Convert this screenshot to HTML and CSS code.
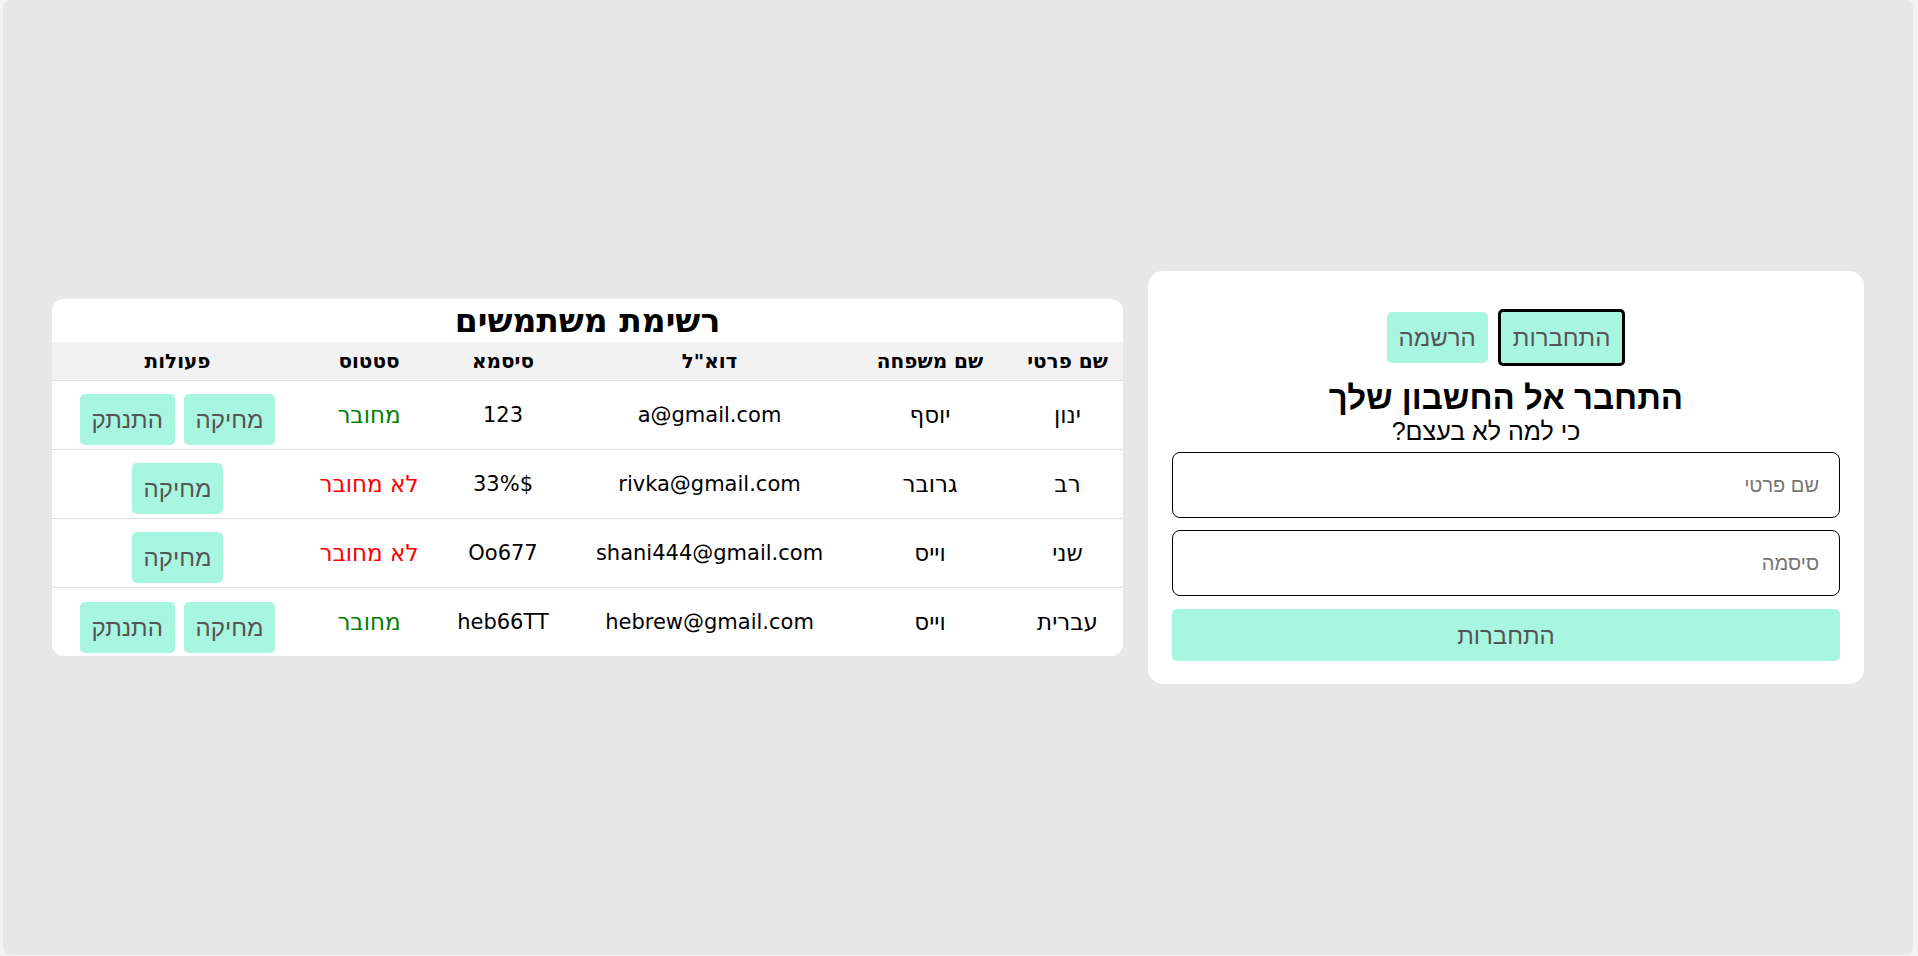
FILE: index.html
```html
<!DOCTYPE html>
<html lang="he" dir="rtl">
<head>
<meta charset="utf-8">
<title>משתמשים</title>
<link rel="stylesheet" href="styles.css">
</head>
<body>
<div class="page">
  <section class="login-card">
    <div class="tabs">
      <button class="tab tab-active">התחברות</button>
      <button class="tab">הרשמה</button>
    </div>
    <h1 class="login-title">התחבר אל החשבון שלך</h1>
    <p class="login-sub">כי למה לא בעצם?</p>
    <input class="field field-first" type="text" placeholder="שם פרטי">
    <input class="field field-second" type="password" placeholder="סיסמה">
    <button class="submit">התחברות</button>
  </section>

  <section class="users-card">
    <h2 class="users-title">רשימת משתמשים</h2>
    <table class="users">
      <colgroup>
        <col class="c-first">
        <col class="c-last">
        <col class="c-email">
        <col class="c-pass">
        <col class="c-status">
        <col class="c-actions">
      </colgroup>
      <thead>
        <tr>
          <th>שם פרטי</th>
          <th>שם משפחה</th>
          <th>דוא"ל</th>
          <th>סיסמא</th>
          <th>סטטוס</th>
          <th>פעולות</th>
        </tr>
      </thead>
      <tbody>
        <tr>
          <td class="he">ינון</td>
          <td class="he">יוסף</td>
          <td>a@gmail.com</td>
          <td>123</td>
          <td class="he on">מחובר</td>
          <td class="actions"><button class="act">מחיקה</button> <button class="act">התנתק</button></td>
        </tr>
        <tr>
          <td class="he">רב</td>
          <td class="he">גרובר</td>
          <td>rivka@gmail.com</td>
          <td>33%$</td>
          <td class="he off">לא מחובר</td>
          <td class="actions"><button class="act">מחיקה</button></td>
        </tr>
        <tr>
          <td class="he">שני</td>
          <td class="he">וייס</td>
          <td>shani444@gmail.com</td>
          <td>Oo677</td>
          <td class="he off">לא מחובר</td>
          <td class="actions"><button class="act">מחיקה</button></td>
        </tr>
        <tr>
          <td class="he">עברית</td>
          <td class="he">וייס</td>
          <td>hebrew@gmail.com</td>
          <td>heb66TT</td>
          <td class="he on">מחובר</td>
          <td class="actions"><button class="act">מחיקה</button> <button class="act">התנתק</button></td>
        </tr>
      </tbody>
    </table>
  </section>
</div>
</body>
</html>
```

FILE: styles.css
```css
* { box-sizing: border-box; }

html, body {
  margin: 0;
  padding: 0;
}

body {
  background: #f3f3f3;
  font-family: "Liberation Sans", Arial, sans-serif;
  color: #000;
  padding: 0 5px 1px 3px;
}

.page {
  height: 955px;
  background: #e7e7e7;
  border-radius: 8px;
  display: flex;
  justify-content: center;
  align-items: center;
  gap: 25px;
}

/* ---------- login card ---------- */
.login-card {
  width: 716px;
  background: #fff;
  border-radius: 15px;
  padding: 38px 24px 23px;
  display: flex;
  flex-direction: column;
  align-items: stretch;
}

.tabs {
  display: flex;
  justify-content: center;
  align-items: center;
  gap: 10px;
  height: 57px;
}

.tab, .submit, .act {
  font-family: "Liberation Sans", Arial, sans-serif;
  font-size: 24px;
  line-height: 27px;
  color: #555;
  background: #a8f6e0;
  border: none;
  border-radius: 5px;
  padding: 12px;
  cursor: pointer;
}

.tab-active {
  border: 3px solid #000;
}

.login-title {
  margin: 13px 0 0;
  font-size: 33px;
  line-height: 37px;
  font-weight: bold;
  text-align: center;
}

.login-sub {
  margin: 1px 0 0;
  padding-right: 40px;
  font-size: 25px;
  line-height: 28px;
  text-align: center;
}

.field {
  height: 66px;
  width: 100%;
  border: 1px solid #000;
  border-radius: 8px;
  padding: 0 20px;
  font-family: "Liberation Sans", Arial, sans-serif;
  font-size: 20px;
  color: #000;
  background: #fff;
}

.field::placeholder { color: #757575; }

.field-first { margin-top: 7px; }
.field-second { margin-top: 12px; }

.submit {
  margin-top: 13px;
  width: 100%;
  height: 52px;
  padding: 12px;
}

/* ---------- users card ---------- */
.users-card {
  width: 1071px;
  background: #fff;
  border-radius: 12px;
  overflow: hidden;
  font-family: "DejaVu Sans", "Liberation Sans", sans-serif;
}

.users-title {
  margin: 0;
  height: 43px;
  line-height: 43px;
  font-size: 33px;
  font-weight: bold;
  text-align: center;
}

.users {
  width: 100%;
  border-collapse: collapse;
  table-layout: fixed;
}

.c-first { width: 111px; }
.c-last { width: 164px; }
.c-email { width: 277px; }
.c-pass { width: 136px; }
.c-status { width: 132px; }
.c-actions { width: 251px; }

.users th {
  background: #f2f2f2;
  font-size: 20px;
  font-weight: bold;
  line-height: 22px;
  padding: 8px 2px;
  border-bottom: 1px solid #ddd;
  text-align: center;
  white-space: nowrap;
}

.users td {
  font-size: 21px;
  line-height: 24px;
  height: 69px;
  padding: 8px 2px;
  border-bottom: 1px solid #ddd;
  text-align: center;
  white-space: nowrap;
}

.users td.he { font-size: 23px; }

.users td.actions {
  padding: 13px 2px 3px;
  line-height: 0;
  font-size: 21px;
}

.users tbody tr:last-child td { border-bottom: none; }

.on { color: #008000; }
.off { color: #ff0000; }

.act {
  margin: 0 1px;
  vertical-align: top;
}
```
